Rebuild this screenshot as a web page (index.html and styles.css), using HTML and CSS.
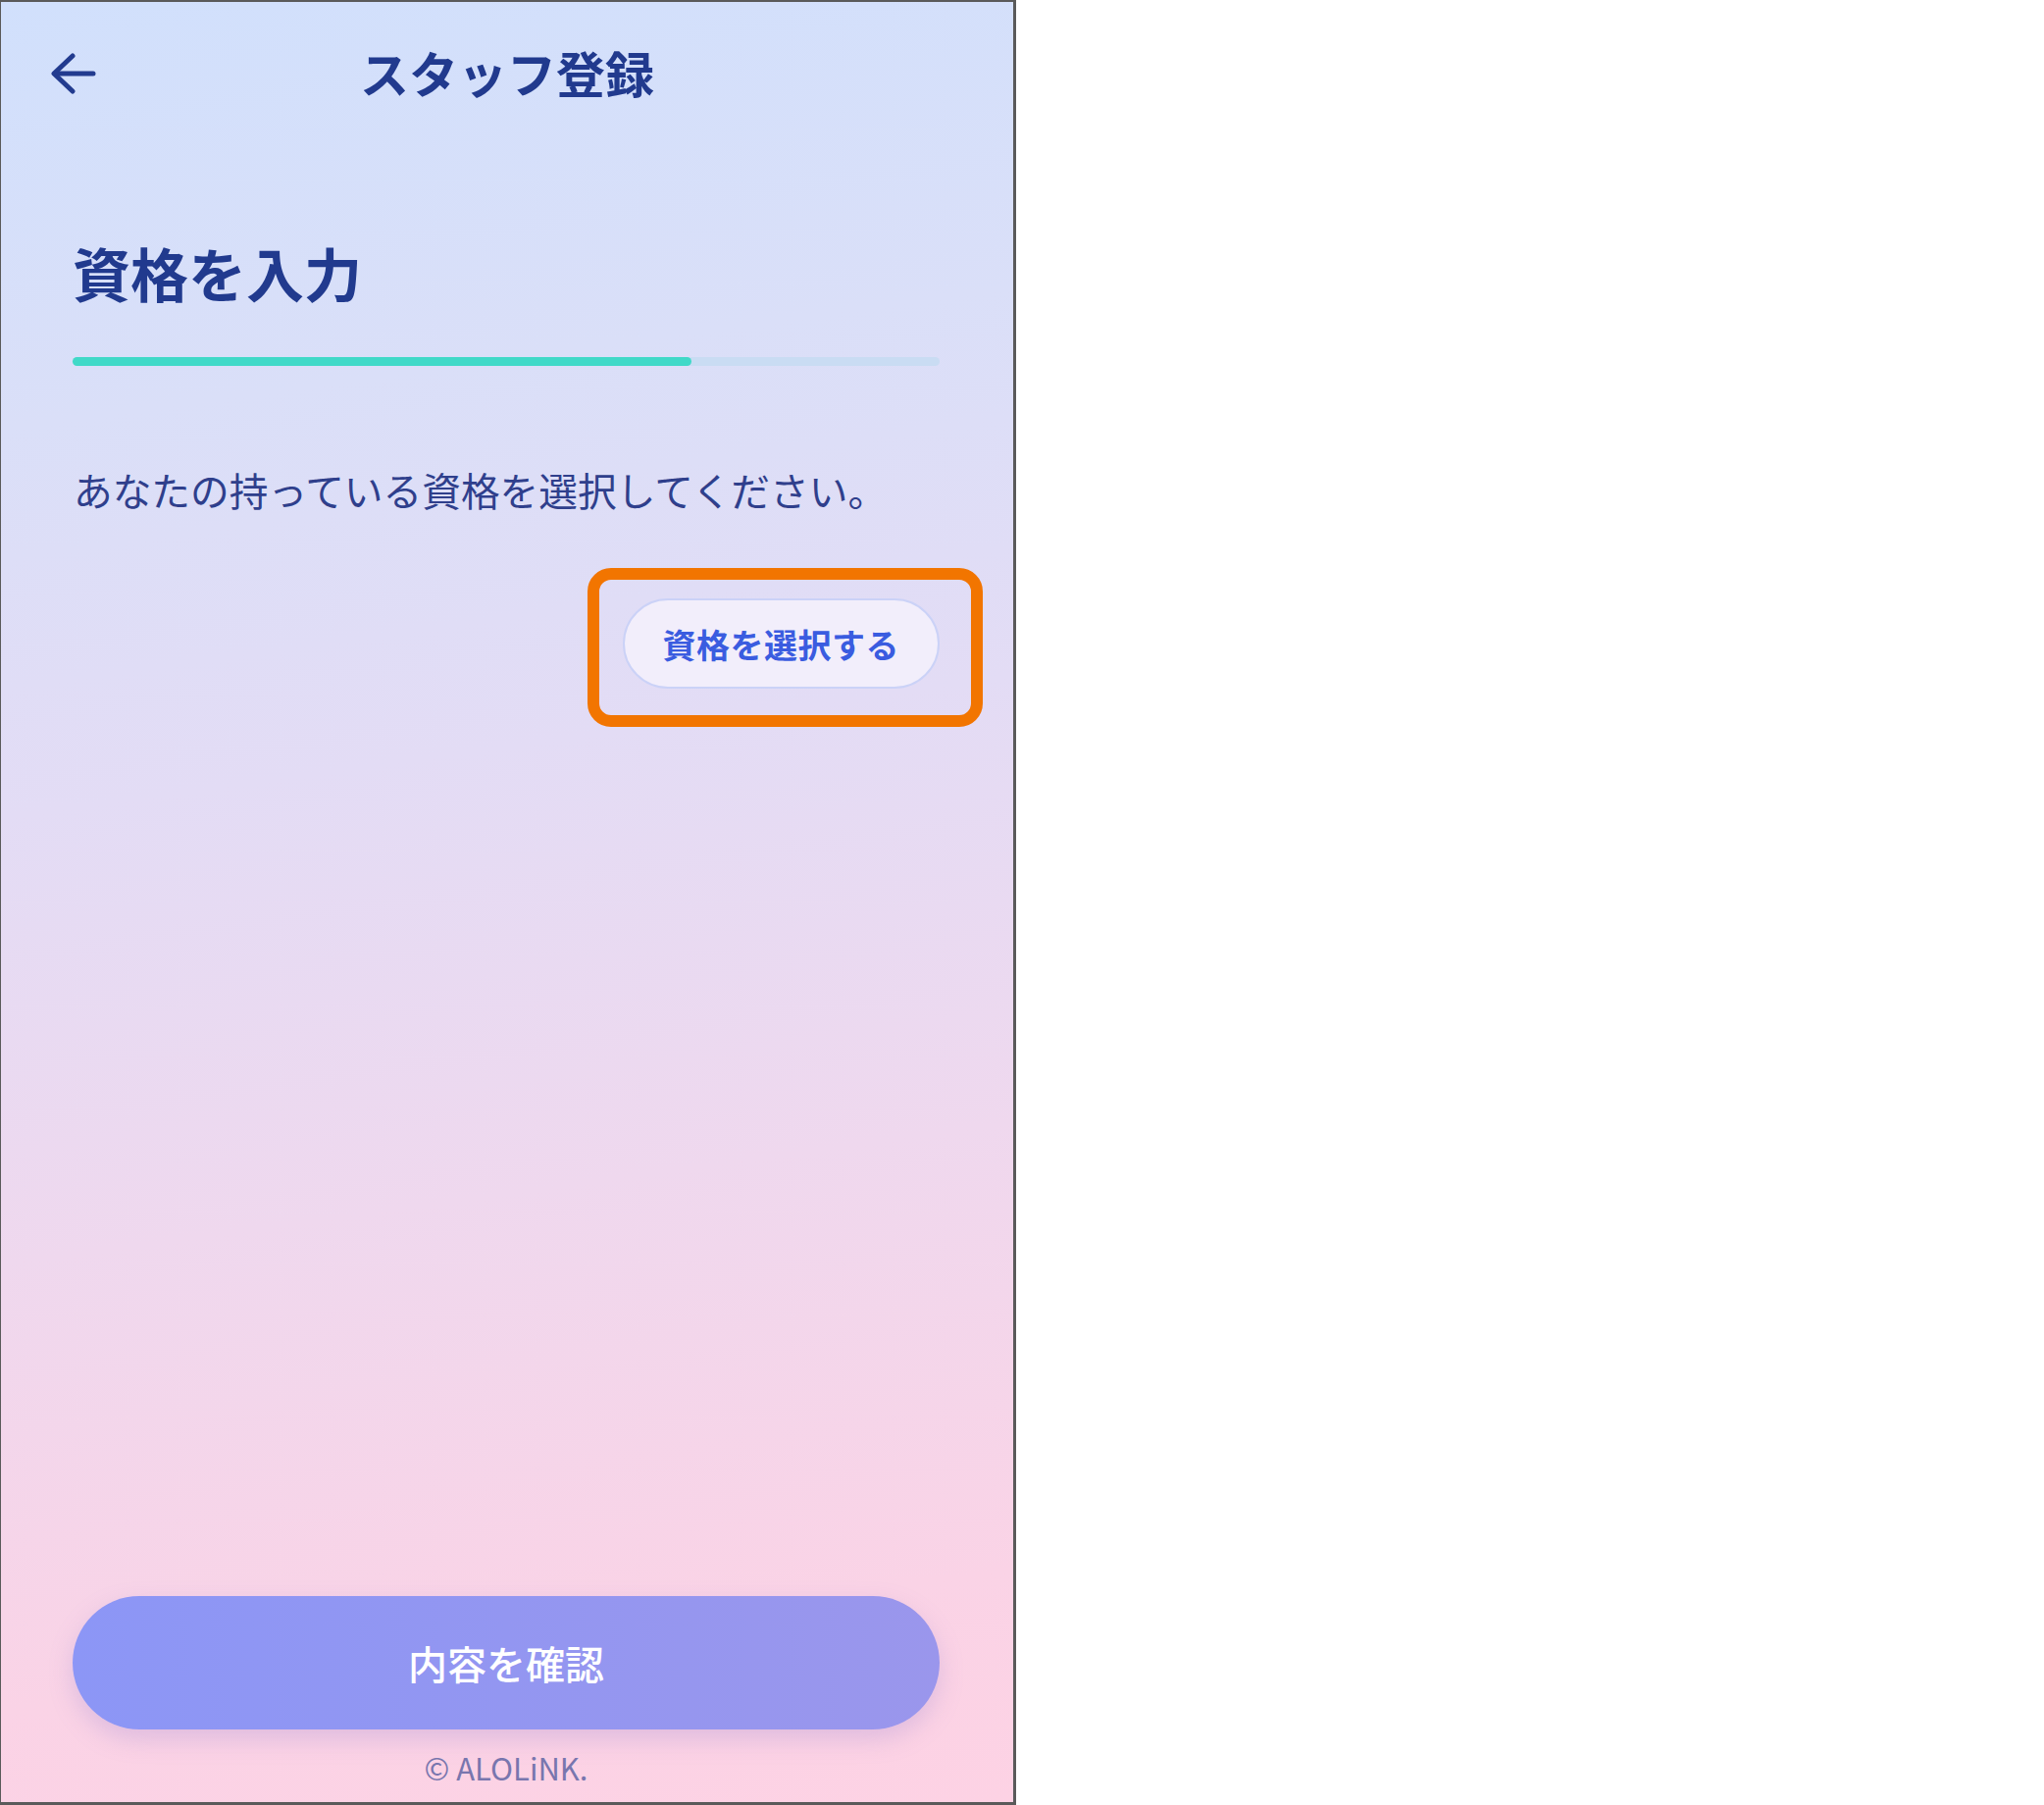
FILE: index.html
```html
<!DOCTYPE html>
<html lang="ja">
<head>
  <meta charset="utf-8">
  <title>スタッフ登録</title>
  <link rel="stylesheet" href="styles.css">
</head>
<body>

<div class="phone">
  <header class="topbar">
    <button class="back" aria-label="戻る">
      <svg width="46" height="42" viewBox="0 0 46 42" fill="none" stroke="currentColor" stroke-width="5" stroke-linecap="round" stroke-linejoin="round">
        <path d="M22 3 L3 21 L22 39"/>
        <path d="M4 21 H43"/>
      </svg>
    </button>
    <h1 class="title">スタッフ登録</h1>
  </header>

  <main class="content">
    <h2 class="heading">資格を入力</h2>
    <div class="progress"><div class="progress-fill" style="width:71.4%"></div></div>

    <p class="lead">あなたの持っている資格を選択してください。</p>

    <div class="action-row">
      <div class="pick-wrap">
        <button class="pick">資格を選択する</button>
        <span class="highlight"></span>
      </div>
    </div>
  </main>

  <footer class="bottom">
    <button class="confirm">内容を確認</button>
    <p class="copy">© ALOLiNK.</p>
  </footer>
</div>

</body>
</html>
```

FILE: styles.css
```css
body {
  margin: 0;
  background: #ffffff;
  font-family: "Noto Sans CJK JP", "Noto Sans", sans-serif;
}

.phone {
  width: 1036px;
  height: 1840px;
  box-sizing: border-box;
  border: solid #5a5a5a;
  border-width: 2px 3px 3px 1px;
  display: flex;
  flex-direction: column;
  background: linear-gradient(172deg, #d1e0fc 0%, #dadff8 22%, #e3dcf5 42%, #efd8ee 65%, #fad3e6 88%, #fdd2e4 100%);
}

/* header */
.topbar {
  height: 148px;
  box-sizing: border-box;
  padding-bottom: 6px;
  display: flex;
  align-items: center;
  justify-content: center;
  position: relative;
}
.back {
  position: absolute;
  left: 51px;
  top: 52px;
  padding: 0;
  border: 0;
  background: none;
  color: #223b8f;
  display: flex;
}
.title {
  margin: 0;
  font-size: 50px;
  font-weight: 700;
  line-height: 1.2;
  color: #213a8e;
}

/* body */
.content {
  padding: 0 75px 0 73px;
}
.heading {
  margin: 93px 0 0;
  font-size: 59px;
  font-weight: 700;
  line-height: 1.2;
  color: #213a8e;
}
.progress {
  margin-top: 50px;
  height: 9px;
  border-radius: 5px;
  background: #c9dcf3;
}
.progress-fill {
  height: 100%;
  border-radius: 5px;
  background: #40d9c8;
}
.lead {
  margin: 96px 0 0 1px;
  font-size: 39.7px;
  line-height: 1.5;
  color: #2f3f8c;
}
.action-row {
  margin-top: 82px;
  display: flex;
  justify-content: flex-end;
}
.pick-wrap {
  position: relative;
}
.pick {
  height: 92px;
  padding: 0 39px;
  border: 2px solid #cbd2f7;
  border-radius: 46px;
  background: #f2eefb;
  font-family: inherit;
  font-size: 34px;
  font-weight: 700;
  color: #3a5ce0;
  letter-spacing: 0.5px;
}
.highlight {
  position: absolute;
  left: -36px;
  right: -44px;
  top: -31px;
  bottom: -39px;
  border: 12px solid #f27500;
  border-radius: 24px;
  pointer-events: none;
}

/* footer */
.bottom {
  margin-top: auto;
  padding: 0 75px 17px 73px;
  display: flex;
  flex-direction: column;
  align-items: stretch;
}
.confirm {
  height: 136px;
  border: 0;
  border-radius: 68px;
  background: linear-gradient(90deg, #8c96f6, #9a96ec);
  box-shadow: 0 10px 24px rgba(150, 130, 210, 0.28);
  font-family: inherit;
  font-size: 40px;
  font-weight: 500;
  color: #ffffff;
}
.copy {
  margin: 20px 0 0;
  text-align: center;
  font-size: 31px;
  line-height: 1.2;
  color: #7876ae;
}
```
